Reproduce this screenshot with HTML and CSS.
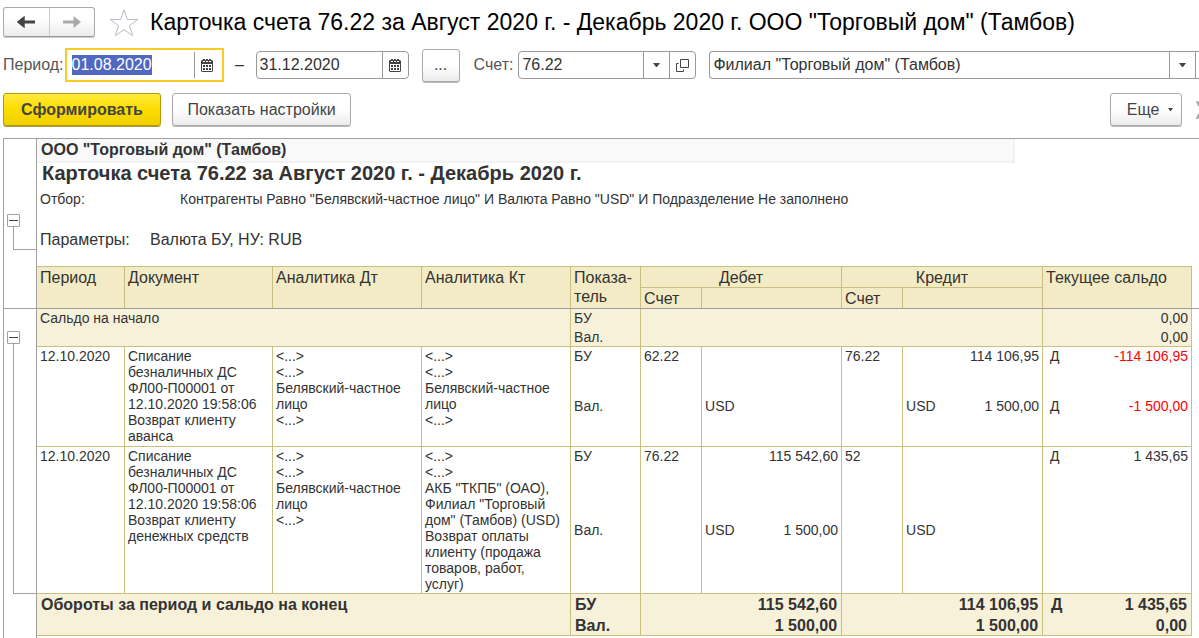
FILE: index.html
```html
<!DOCTYPE html>
<html lang="ru">
<head>
<meta charset="utf-8">
<meta name="viewport" content="width=device-width, initial-scale=1">
<title>Карточка счета 76.22</title>
<link rel="stylesheet" href="styles.css">
</head>
<body>
<svg class="sprite" aria-hidden="true">
  <symbol id="calendar" viewBox="0 0 12 13">
    <path fill="#444" fill-rule="evenodd" d="M2 0h2v1h1V0h2v1h1V0h2v1h1l1 1v10l-1 1H1l-1-1V2l1-1h1zM1 5v7h10V5z"/>
    <path fill="#fff" d="M2 2h2v1H2zm3 0h2v1H5zm3 0h2v1H8z"/>
    <path fill="#444" d="M2 6h2v2H2zm3 0h2v2H5zm3 0h2v2H8zM2 9h2v2H2zm3 0h2v2H5zm3 0h2v2H8z"/>
  </symbol>
  <symbol id="caret" viewBox="0 0 7 4"><path fill="#444" d="M0 0h7L4 4H3z"/></symbol>
</svg>
<main class="window">
  <header class="caption">
    <div class="nav">
      <button class="nav-button" type="button" aria-label="Назад"><svg width="18" height="12" viewBox="0 0 18 12"><path d="M7.500 0v4.500H18v3H7.500V12L0 6z" fill="#444"/><path d="M7.500 0v4.500L5.500 6l2 1.500V12L0 6z" fill="#444"/></svg></button>
      <button class="nav-button" type="button" aria-label="Вперед"><svg width="18" height="12" viewBox="0 0 18 12"><path d="M10.500 0v4.500H0v3h10.500V12L18 6z" fill="#a9a9a9"/></svg></button>
    </div>
    <button class="star" type="button" aria-label="В избранное"><svg width="30" height="29" viewBox="0 0 30 29"><path d="M15 2l3.300 9.500H28.500l-8 6.200 3.200 10L15 21.600l-8.700 6.100 3.200-10-8-6.200h10.200z" fill="#fff" stroke="#b4bcc4" stroke-width="1"/></svg></button>
    <h1 class="title">Карточка счета 76.22 за Август 2020 г. - Декабрь 2020 г. ООО "Торговый дом" (Тамбов)</h1>
  </header>

  <form class="filters">
    <label class="label" for="from">Период:</label>
    <div class="field field-active">
      <input class="input" id="from" type="text" value="01.08.2020">
      <button class="field-button" type="button" aria-label="Выбрать дату начала"><svg width="12" height="13"><use href="#calendar"/></svg></button>
    </div>
    <span class="dash">–</span>
    <div class="field field-date">
      <input class="input" type="text" value="31.12.2020" aria-label="Конец периода">
      <button class="field-button" type="button" aria-label="Выбрать дату конца"><svg width="12" height="13"><use href="#calendar"/></svg></button>
    </div>
    <button class="button button-dots" type="button">...</button>
    <label class="label" for="account">Счет:</label>
    <div class="field field-account">
      <input class="input" id="account" type="text" value="76.22">
      <button class="field-button" type="button" aria-label="Список счетов"><svg width="7" height="4"><use href="#caret"/></svg></button>
      <button class="field-button" type="button" aria-label="Открыть счет"><svg width="13" height="13" viewBox="0 0 13 13"><path d="M4.500.5h8v8h-8zM2.500 4.500h-2v8h7v-2" fill="none" stroke="#444"/></svg></button>
    </div>
    <div class="field field-company">
      <input class="input" type="text" value='Филиал "Торговый дом" (Тамбов)' aria-label="Организация">
      <button class="field-button" type="button" aria-label="Список организаций"><svg width="7" height="4"><use href="#caret"/></svg></button>
      <span class="field-edge"></span>
    </div>
  </form>

  <div class="commands">
    <button class="button button-primary" type="button">Сформировать</button>
    <button class="button button-settings" type="button">Показать настройки</button>
    <button class="button button-more" type="button">Еще <svg width="5" height="3" viewBox="0 0 7 4"><use href="#caret"/></svg></button>
    <svg class="cut-icon" width="3" height="20" viewBox="0 0 3 20"><path d="M0 1h2l1 2v3H2zM0 19h2l1-2v-3H2z" fill="#9aa4ab"/></svg>
  </div>

  <section class="sheet">
    <div class="gutter gutter-head">
      <button class="toggle" type="button" aria-label="Свернуть параметры"></button>
      <div class="bracket"></div>
    </div>
    <div class="pane pane-head">
      <div class="company">ООО "Торговый дом" (Тамбов)</div>
      <h2 class="report-title">Карточка счета 76.22 за Август 2020 г. - Декабрь 2020 г.</h2>
      <div class="selection"><span>Отбор:</span><span>Контрагенты Равно "Белявский-частное лицо" И Валюта Равно "USD" И Подразделение Не заполнено</span></div>
      <div class="params"><span>Параметры:</span><span>Валюта БУ, НУ: RUB</span></div>
      <table class="grid grid-head">
        <colgroup><col class="c-period"><col class="c-doc"><col class="c-an"><col class="c-an"><col class="c-ind"><col class="c-acc"><col class="c-sum"><col class="c-acc"><col class="c-sum"><col></colgroup>
        <thead>
          <tr><th rowspan="2">Период</th><th rowspan="2">Документ</th><th rowspan="2">Аналитика Дт</th><th rowspan="2">Аналитика Кт</th><th rowspan="2">Показа-<br>тель</th><th class="center" colspan="2">Дебет</th><th class="center" colspan="2">Кредит</th><th rowspan="2">Текущее сальдо</th></tr>
          <tr><th>Счет</th><th></th><th>Счет</th><th></th></tr>
        </thead>
      </table>
    </div>
    <div class="gutter gutter-body">
      <button class="toggle" type="button" aria-label="Свернуть обороты"></button>
      <div class="bracket"></div>
    </div>
    <div class="pane">
      <table class="grid grid-body">
        <colgroup><col class="c-period"><col class="c-doc"><col class="c-an"><col class="c-an"><col class="c-ind"><col class="c-acc"><col class="c-sum"><col class="c-acc"><col class="c-sum"><col></colgroup>
        <tbody class="opening">
          <tr class="upper"><td colspan="4" rowspan="2" class="last">Сальдо на начало</td><td>БУ</td><td colspan="4" rowspan="2" class="last"></td><td class="num">0,00</td></tr>
          <tr><td>Вал.</td><td class="num">0,00</td></tr>
        </tbody>
        <tbody class="entry">
          <tr class="upper"><td rowspan="2" class="last">12.10.2020</td><td rowspan="2" class="last">Списание<br>безналичных ДС<br>ФЛ00-П00001 от<br>12.10.2020 19:58:06<br>Возврат клиенту<br>аванса</td><td rowspan="2" class="last">&lt;...&gt;<br>&lt;...&gt;<br>Белявский-частное<br>лицо<br>&lt;...&gt;</td><td rowspan="2" class="last">&lt;...&gt;<br>&lt;...&gt;<br>Белявский-частное<br>лицо<br>&lt;...&gt;</td><td>БУ</td><td>62.22</td><td></td><td>76.22</td><td class="num">114 106,95</td><td><div class="pair balance"><span>Д</span><span class="negative">-114 106,95</span></div></td></tr>
          <tr><td>Вал.</td><td></td><td>USD</td><td></td><td><div class="pair"><span>USD</span><span>1 500,00</span></div></td><td><div class="pair balance"><span>Д</span><span class="negative">-1 500,00</span></div></td></tr>
        </tbody>
        <tbody class="entry entry-tall">
          <tr class="upper"><td rowspan="2" class="last">12.10.2020</td><td rowspan="2" class="last">Списание<br>безналичных ДС<br>ФЛ00-П00001 от<br>12.10.2020 19:58:06<br>Возврат клиенту<br>денежных средств</td><td rowspan="2" class="last">&lt;...&gt;<br>&lt;...&gt;<br>Белявский-частное<br>лицо<br>&lt;...&gt;</td><td rowspan="2" class="last">&lt;...&gt;<br>&lt;...&gt;<br>АКБ "ТКПБ" (ОАО),<br>Филиал "Торговый<br>дом" (Тамбов) (USD)<br>Возврат оплаты<br>клиенту (продажа<br>товаров, работ,<br>услуг)</td><td>БУ</td><td>76.22</td><td class="num">115 542,60</td><td>52</td><td></td><td><div class="pair balance"><span>Д</span><span>1 435,65</span></div></td></tr>
          <tr><td>Вал.</td><td></td><td><div class="pair"><span>USD</span><span>1 500,00</span></div></td><td></td><td>USD</td><td></td></tr>
        </tbody>
        <tfoot>
          <tr class="upper"><td colspan="4" rowspan="2" class="last">Обороты за период и сальдо на конец</td><td>БУ</td><td colspan="2" class="num">115 542,60</td><td colspan="2" class="num">114 106,95</td><td><div class="pair balance"><span>Д</span><span>1 435,65</span></div></td></tr>
          <tr><td>Вал.</td><td colspan="2" class="num">1 500,00</td><td colspan="2" class="num">1 500,00</td><td class="num">0,00</td></tr>
        </tfoot>
      </table>
    </div>
  </section>
</main>
<script src="app.js"></script>
</body>
</html>
```
FILE: app.js
```js
const from = document.getElementById("from");
from.focus();
from.select();
```
FILE: styles.css
```css
* { box-sizing: border-box; }
body { margin: 0; background: #fff; color: #333; font: 16px/20px "Liberation Sans", Arial, sans-serif; overflow: hidden; }
button, input { font: inherit; color: inherit; margin: 0; padding: 0; }
button { display: flex; align-items: center; justify-content: center; }
.sprite { display: none; }
.window { display: flex; flex-direction: column; min-height: 100vh; padding: 7px 0 0 3px; gap: 11px; }

.caption { display: flex; align-items: center; height: 30px; }
.nav { display: flex; width: 92px; height: 30px; border: 1px solid #aaa; border-bottom-color: #999; border-radius: 3px; background: linear-gradient(#fff 40%, #ebebeb); box-shadow: 0 1px #ccc; }
.nav-button { flex: 1; border: 0; background: none; }
.nav-button + .nav-button { border-left: 1px solid #ccc; }
.star { margin: 0 11px 0 14px; border: 0; background: none; }
.title { margin: 0; color: #000; font-size: 23px; line-height: 30px; font-weight: 400; white-space: nowrap; }

.filters { display: flex; align-items: center; height: 34px; }
.label { color: #555; white-space: nowrap; }
.field { display: flex; height: 28px; border: 1px solid #999; border-radius: 4px; background: #fff; }
.field-active { width: 159px; height: 34px; margin-left: 1px; padding: 2px; border: 2px solid #f9cb23; border-radius: 0; }
.field-date { width: 153px; }
.field-account { width: 178px; margin: 0 13px 0 5px; }
.field-company { flex: 1; border-right: 0; border-radius: 4px 0 0 4px; }
.field-edge { width: 4px; border-left: 1px solid #999; }
.input { flex: 1; min-width: 0; border: 0; outline: 0; padding-left: 3px; background: none; }
.input::selection { background: #5068c0; color: #fff; }
.field-button { width: 26px; border: 0; border-left: 1px solid #999; background: none; }
.dash { width: 32px; text-align: center; }

.button { height: 33px; border: 1px solid #aaa; border-radius: 3px; background: linear-gradient(#fff 50%, #ebebeb); box-shadow: 0 1px #bbb; color: #444; white-space: nowrap; }
.button-dots { width: 38px; margin: 0 14px 0 13px; }
.commands { display: flex; height: 34px; overflow: hidden; }
.button-primary { width: 158px; border-color: #b39b00; background: linear-gradient(#ffea3d, #fddc00 50%, #efd000); box-shadow: 0 1px #a89a40; font-weight: 700; }
.button-settings { width: 179px; margin-left: 11px; }
.button-more { width: 72px; margin: 0 14px 0 auto; gap: 9px; padding-left: 8px; }
.cut-icon { margin-top: 7px; }

.sheet { flex: 1; display: grid; grid-template: auto 1fr / 34px 1fr; border-top: 1px solid #a0a0a0; }
.gutter { display: flex; flex-direction: column; border-left: 1px solid #a0a0a0; border-right: 1px solid #a0a0a0; padding-left: 3px; }
.gutter-head { padding-top: 75px; border-bottom: 1px solid #a0a0a0; }
.gutter-body { padding-top: 22px; padding-bottom: 44px; }
.toggle { width: 13px; height: 13px; border: 1px solid #a0a0a0; border-radius: 1px; background: linear-gradient(#444, #444) center / 9px 1px no-repeat #fff; }
.bracket { flex: 1; margin-left: 6px; border: solid #a0a0a0; border-width: 0 0 1px 1px; }
.gutter-head .bracket { flex: none; height: 23px; }
.pane { padding-right: 7px; }
.pane-head { border-bottom: 1px solid #a0a0a0; }

.company { height: 24px; margin-right: 177px; padding: 0 1px 1px 4px; border: solid #f2f2f2; border-width: 0 2px 2px 0; background: #f9f9f9; font-size: 16px; line-height: 21px; font-weight: 700; }
.report-title { margin: 0; padding-left: 5px; font-size: 20px; line-height: 21px; }
.selection, .params { display: grid; padding-left: 3px; }
.selection { grid-template-columns: 140px 1fr; font-size: 14px; line-height: 30px; }
.params { grid-template-columns: 110px 1fr; padding-bottom: 1px; line-height: 51px; }

.grid { width: 100%; table-layout: fixed; border-collapse: separate; border-spacing: 0; font-size: 14px; line-height: 16px; }
.c-period { width: 88px; }
.c-doc { width: 148px; }
.c-an { width: 149px; }
.c-ind { width: 70px; }
.c-acc { width: 61px; }
.c-sum { width: 140px; }
.grid th, .grid td { padding: 1px 3px; border: solid #c9bf7e; border-width: 0 1px 1px 0; text-align: left; vertical-align: top; white-space: nowrap; }
.grid-head { border-top: 1px solid #c9bf7e; background: #f3ebc5; font-size: 16px; line-height: 19px; }
.grid th { height: 21px; padding-bottom: 0; font-weight: 400; }
.grid-head tr:last-child th, .grid-head th[rowspan] { border-bottom: 0; }
.grid-head tr:last-child th { height: 20px; }
.grid .center { text-align: center; }
.grid .upper td:not(.last) { border-bottom: 0; }
.grid .num { text-align: right; }
.opening, tfoot { background: #f7f1da; }
.opening tr { height: 19px; }
.entry tr { height: 50px; }
.entry-tall .upper { height: 74px; }
.entry-tall tr { height: 73px; }
tfoot { font-size: 16px; line-height: 19px; font-weight: 700; }
.grid tfoot tr { height: 21px; }
.grid tfoot td { padding: 1px 4px 0; }
.pair { display: flex; justify-content: space-between; }
.balance { padding-left: 4px; }
.negative { color: #f00; }
```
